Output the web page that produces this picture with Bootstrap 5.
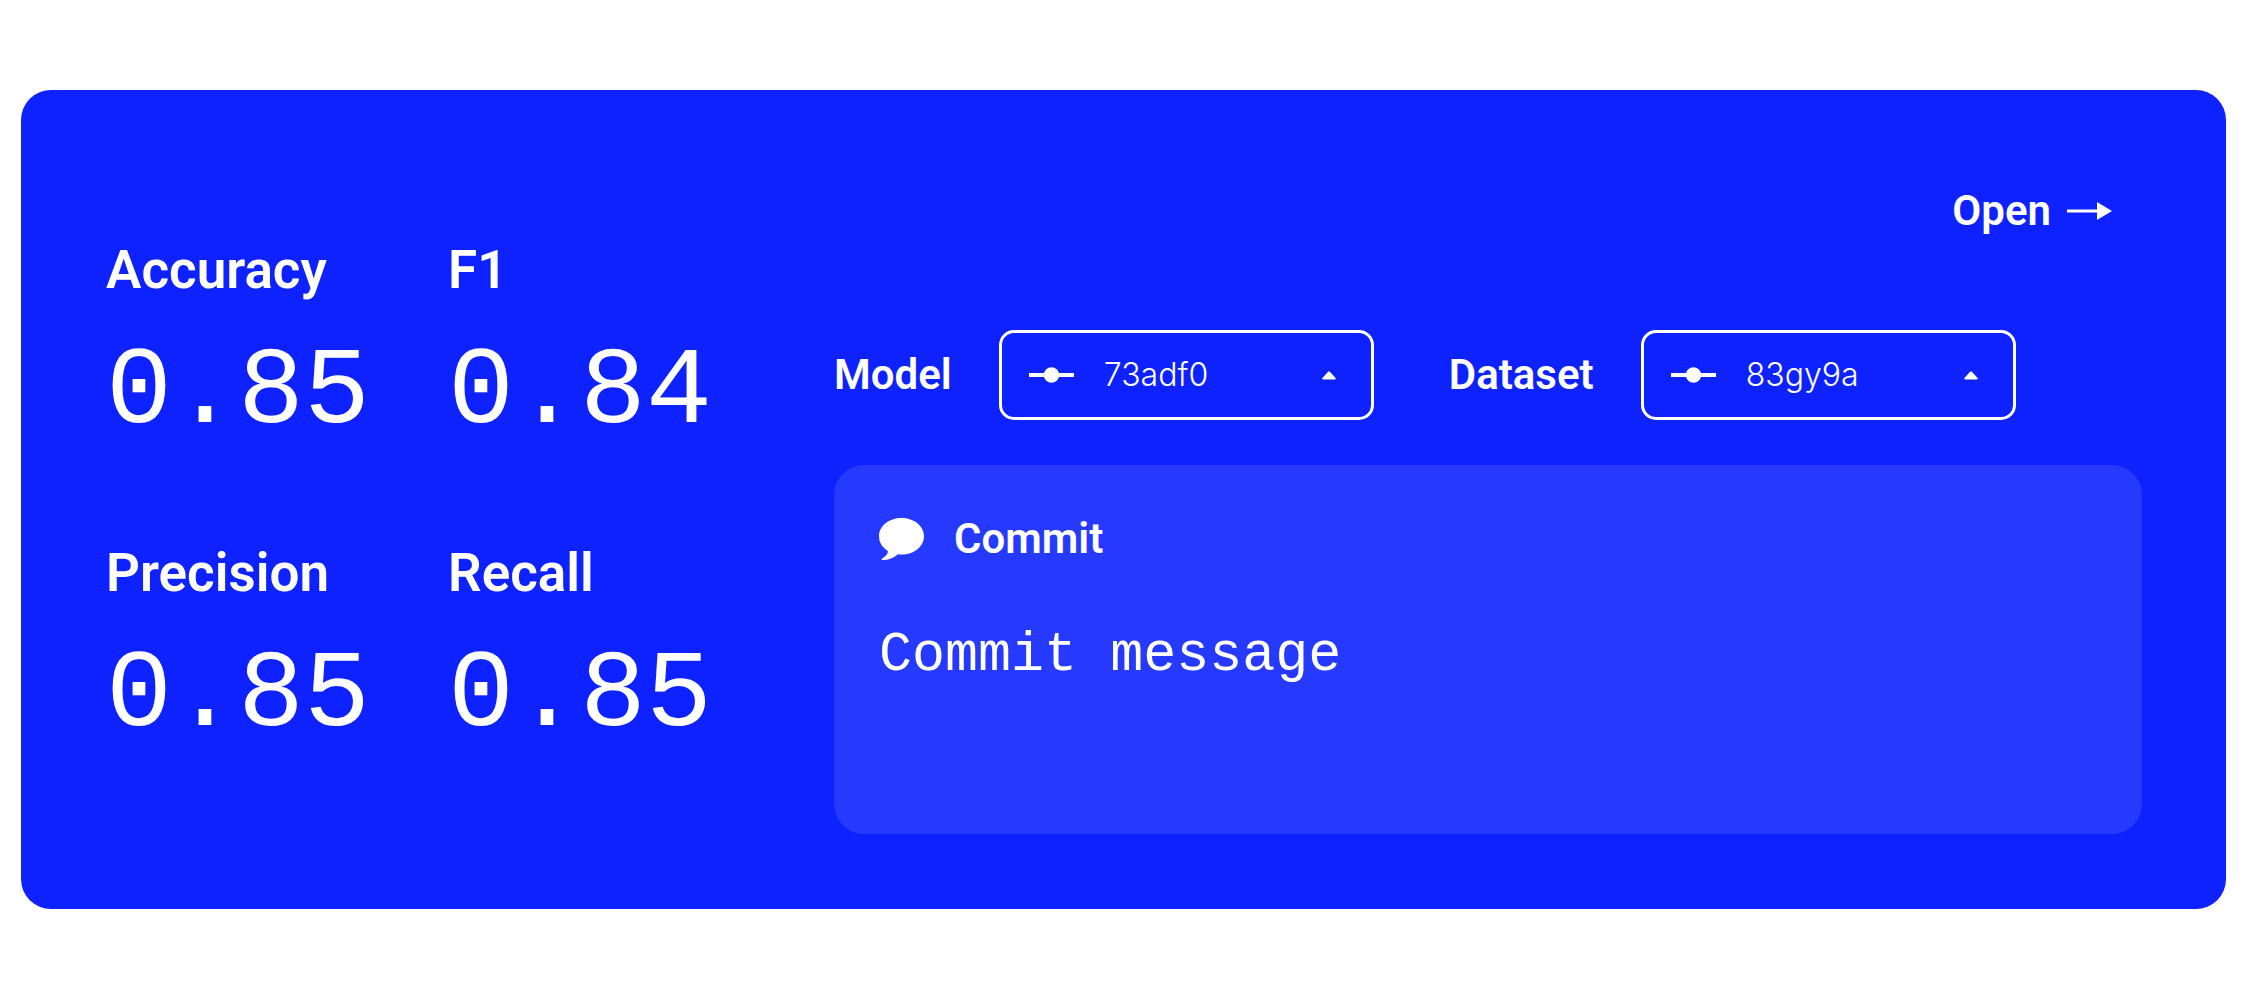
<!DOCTYPE html>
<html lang="en">
<head>
<meta charset="utf-8">
<meta name="viewport" content="width=device-width, initial-scale=1">
<title>Model run</title>
<link href="https://cdn.jsdelivr.net/npm/bootstrap@5.3.0/dist/css/bootstrap.min.css" rel="stylesheet">
<style>
  body { font-family: Roboto, "Liberation Sans", sans-serif; background: #fff; }
  .page { padding: 90px 21px 0; }
  .run { background: #0d22ff; border-radius: 30px; padding: 97px 84px 75px 85px; column-gap: 122px; color: #fff; }
  .metrics { grid-template-columns: auto auto; column-gap: 78px; row-gap: 90px; padding-top: 53px; align-content: start; }
  .metric-name { font-size: 53px; line-height: 60px; font-weight: 600; margin: 0 0 33px; }
  .metric-value { font: 110px/120px "Liberation Mono", monospace; margin: 0; }
  .title-text { font-size: 42px; line-height: 48px; font-weight: 600; }
  .open-link { color: #fff; gap: 16px; margin: 0 30px 95px 0; }
  .pickers { column-gap: 75px; row-gap: 30px; margin-bottom: 45px; }
  .picker { gap: 47px; }
  .picker-box { width: 375px; }
  .picker-box > * { grid-area: 1 / 1; align-self: center; pointer-events: none; }
  .picker-box > .form-select {
    pointer-events: auto; height: 90px; padding: 0 90px 0 102px; background: none; color: #fff;
    border: 3px solid #fff; border-radius: 15px; font: 300 32px/40px Inter, sans-serif;
  }
  .form-select option { color: #000; }
  .picker-commit { margin-left: 30px; }
  .picker-caret { justify-self: end; margin-right: 38px; }
  .commit-panel { background: #2639ff; border-radius: 30px; padding: 50px 45px; min-height: 369px; }
  .commit-head { gap: 30px; margin-bottom: 60px; }
  .commit-text {
    background: none; border: 0; padding: 0; color: #fff; resize: none; outline-offset: 6px;
    font: 55px/66px "Liberation Mono", monospace;
  }
</style>
</head>
<body>
<svg class="d-none">
  <symbol id="icon-commit" viewBox="0 0 45 16"><path d="M0 8h45" stroke="currentColor" stroke-width="4"/><circle cx="22.5" cy="8" r="7.7" fill="currentColor"/></symbol>
  <symbol id="icon-caret" viewBox="0 0 14 9"><path d="M5.900 1Q7-.3 8.100 1L13.600 7Q14.400 8.500 12.500 8.600H1.500Q-.4 8.500.4 7Z" fill="currentColor"/></symbol>
</svg>
<main class="page">
  <section class="run d-flex">
    <div class="metrics d-grid flex-shrink-0">
      <div><h2 class="metric-name">Accuracy</h2><p class="metric-value">0.85</p></div>
      <div><h2 class="metric-name">F1</h2><p class="metric-value">0.84</p></div>
      <div><h2 class="metric-name">Precision</h2><p class="metric-value">0.85</p></div>
      <div><h2 class="metric-name">Recall</h2><p class="metric-value">0.85</p></div>
    </div>

    <div class="flex-grow-1 d-flex flex-column">
      <a href="#" class="open-link title-text d-flex align-items-center align-self-end text-decoration-none">
        Open
        <svg width="45" height="18" viewBox="0 0 45 18" aria-hidden="true"><path d="M0 9h31" stroke="currentColor" stroke-width="3"/><path d="M30 0l15 9-15 9z" fill="currentColor"/></svg>
      </a>

      <div class="pickers d-flex flex-wrap">
        <div class="picker d-flex align-items-center">
          <label for="model" class="title-text">Model</label>
          <div class="picker-box d-grid">
            <select id="model" class="form-select"><option>73adf0</option></select>
            <svg class="picker-commit" width="45" height="16" aria-hidden="true"><use href="#icon-commit"/></svg>
            <svg class="picker-caret" width="14" height="9" aria-hidden="true"><use href="#icon-caret"/></svg>
          </div>
        </div>
        <div class="picker d-flex align-items-center">
          <label for="dataset" class="title-text">Dataset</label>
          <div class="picker-box d-grid">
            <select id="dataset" class="form-select"><option>83gy9a</option></select>
            <svg class="picker-commit" width="45" height="16" aria-hidden="true"><use href="#icon-commit"/></svg>
            <svg class="picker-caret" width="14" height="9" aria-hidden="true"><use href="#icon-caret"/></svg>
          </div>
        </div>
      </div>

      <div class="commit-panel d-flex flex-column">
        <div class="commit-head d-flex align-items-center">
          <svg width="45" height="42" viewBox="0 0 45 42" aria-hidden="true"><path d="M22.500 0C35 0 45 8 45 18.300S35 36.600 22.500 36.600Q20.500 36.600 19 36.300Q11.500 42.500 3 42Q2 41.500 3.200 40.500Q9.500 36.500 8.800 33Q0 27.500 0 18.300C0 8 10 0 22.500 0Z" fill="currentColor"/></svg>
          <label for="message" class="title-text">Commit</label>
        </div>
        <textarea id="message" class="commit-text w-100 flex-grow-1" rows="2">Commit message</textarea>
      </div>
    </div>
  </section>
</main>
<script src="https://cdn.jsdelivr.net/npm/bootstrap@5.3.0/dist/js/bootstrap.bundle.min.js"></script>
</body>
</html>
